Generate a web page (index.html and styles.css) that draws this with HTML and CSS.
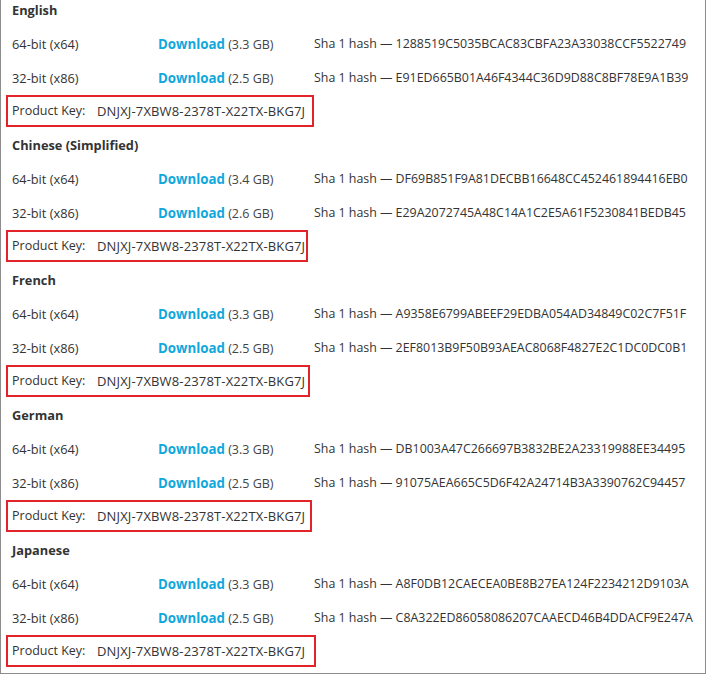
FILE: index.html
```html
<!DOCTYPE html>
<html>
<head>
<meta charset="utf-8">
<link rel="stylesheet" href="styles.css">
</head>
<body>
<div class="frame">
  <section class="lang">
    <h2 class="lang-title">English</h2>
    <div class="row"><span class="arch">64-bit (x64)</span><span class="dl"><a class="dl-link">Download</a> (3.3 GB)</span><span class="hash">Sha 1 hash — 1288519C5035BCAC83CBFA23A33038CCF5522749</span></div>
    <div class="row"><span class="arch">32-bit (x86)</span><span class="dl"><a class="dl-link">Download</a> (2.5 GB)</span><span class="hash">Sha 1 hash — E91ED665B01A46F4344C36D9D88C8BF78E9A1B39</span></div>
    <div class="key key-w1"><span class="key-label">Product Key:</span><span class="key-value">DNJXJ-7XBW8-2378T-X22TX-BKG7J</span></div>
  </section>
  <section class="lang">
    <h2 class="lang-title">Chinese (Simplified)</h2>
    <div class="row"><span class="arch">64-bit (x64)</span><span class="dl"><a class="dl-link">Download</a> (3.4 GB)</span><span class="hash">Sha 1 hash — DF69B851F9A81DECBB16648CC452461894416EB0</span></div>
    <div class="row"><span class="arch">32-bit (x86)</span><span class="dl"><a class="dl-link">Download</a> (2.6 GB)</span><span class="hash">Sha 1 hash — E29A2072745A48C14A1C2E5A61F5230841BEDB45</span></div>
    <div class="key key-w2"><span class="key-label">Product Key:</span><span class="key-value">DNJXJ-7XBW8-2378T-X22TX-BKG7J</span></div>
  </section>
  <section class="lang">
    <h2 class="lang-title">French</h2>
    <div class="row"><span class="arch">64-bit (x64)</span><span class="dl"><a class="dl-link">Download</a> (3.3 GB)</span><span class="hash">Sha 1 hash — A9358E6799ABEEF29EDBA054AD34849C02C7F51F</span></div>
    <div class="row"><span class="arch">32-bit (x86)</span><span class="dl"><a class="dl-link">Download</a> (2.5 GB)</span><span class="hash">Sha 1 hash — 2EF8013B9F50B93AEAC8068F4827E2C1DC0DC0B1</span></div>
    <div class="key key-w3"><span class="key-label">Product Key:</span><span class="key-value">DNJXJ-7XBW8-2378T-X22TX-BKG7J</span></div>
  </section>
  <section class="lang">
    <h2 class="lang-title">German</h2>
    <div class="row"><span class="arch">64-bit (x64)</span><span class="dl"><a class="dl-link">Download</a> (3.3 GB)</span><span class="hash">Sha 1 hash — DB1003A47C266697B3832BE2A23319988EE34495</span></div>
    <div class="row"><span class="arch">32-bit (x86)</span><span class="dl"><a class="dl-link">Download</a> (2.5 GB)</span><span class="hash">Sha 1 hash — 91075AEA665C5D6F42A24714B3A3390762C94457</span></div>
    <div class="key key-w4"><span class="key-label">Product Key:</span><span class="key-value">DNJXJ-7XBW8-2378T-X22TX-BKG7J</span></div>
  </section>
  <section class="lang">
    <h2 class="lang-title">Japanese</h2>
    <div class="row"><span class="arch">64-bit (x64)</span><span class="dl"><a class="dl-link">Download</a> (3.3 GB)</span><span class="hash">Sha 1 hash — A8F0DB12CAECEA0BE8B27EA124F2234212D9103A</span></div>
    <div class="row"><span class="arch">32-bit (x86)</span><span class="dl"><a class="dl-link">Download</a> (2.5 GB)</span><span class="hash">Sha 1 hash — C8A322ED86058086207CAAECD46B4DDACF9E247A</span></div>
    <div class="key key-w5"><span class="key-label">Product Key:</span><span class="key-value">DNJXJ-7XBW8-2378T-X22TX-BKG7J</span></div>
  </section>
</div>
</body>
</html>
```
FILE: styles.css
```css
html, body {
  margin: 0;
  padding: 0;
  background: #fff;
}
body {
  font-family: "Open Sans", "Noto Sans", sans-serif;
  font-size: 12.5px;
  color: #333;
}
.frame {
  width: 704px;
  border: 1px solid #8c8c8c;
  border-top: none;
}
.lang {
  margin-bottom: 8px;
}
.lang:last-child {
  margin-bottom: 6px;
}
.lang-title {
  margin: 0 0 7px 0;
  padding-left: 11px;
  height: 20px;
  line-height: 20px;
  font-size: 12.8px;
  font-weight: 700;
  color: #333;
}
.row {
  display: grid;
  grid-template-columns: 146px 156px auto;
  height: 34px;
  line-height: 34px;
  padding-left: 11px;
  white-space: nowrap;
}
.arch {
  font-size: 12.8px;
}
.dl {
  color: #444;
}
.dl-link {
  color: #0fa8dc;
  font-weight: 700;
  font-size: 13.3px;
}
.hash {
  font-size: 12.4px;
}
.key {
  box-sizing: border-box;
  margin-left: 5px;
  height: 32px;
  line-height: 28px;
  border: 2px solid #e2232a;
  padding-left: 4px;
  white-space: nowrap;
  display: flex;
}
.key-label {
  width: 85px;
}
.key-value {
  font-size: 13px;
  letter-spacing: 0.15px;
}
.key-w1 { width: 308px; }
.key-w2 { width: 302px; }
.key-w3 { width: 304px; }
.key-w4 { width: 306px; }
.key-w5 { width: 310px; }
```
